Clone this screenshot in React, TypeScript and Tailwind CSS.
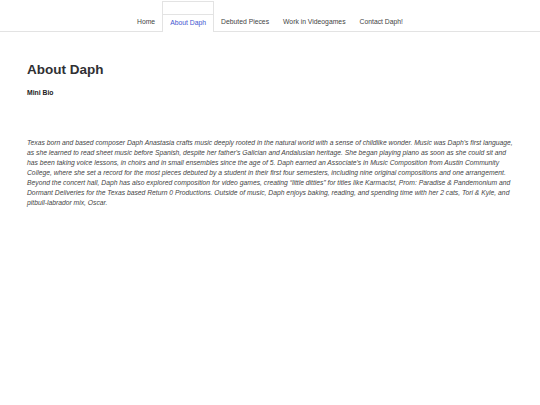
import React from "react";

const tabs = ["Home", "About Daph", "Debuted Pieces", "Work in Videogames", "Contact Daph!"];

const bio =
  "Texas born and based composer Daph Anastasia crafts music deeply rooted in the natural world with a sense of childlike wonder. Music was Daph's first language, as she learned to read sheet music before Spanish, despite her father's Galician and Andalusian heritage. She began playing piano as soon as she could sit and has been taking voice lessons, in choirs and in small ensembles since the age of 5. Daph earned an Associate's in Music Composition from Austin Community College, where she set a record for the most pieces debuted by a student in their first four semesters, including nine original compositions and one arrangement. Beyond the concert hall, Daph has also explored composition for video games, creating \u201clittle ditties\u201d for titles like Karmacist, Prom: Paradise & Pandemonium and Dormant Deliveries for the Texas based Return 0 Productions. Outside of music, Daph enjoys baking, reading, and spending time with her 2 cats, Tori & Kyle, and pitbull-labrador mix, Oscar.";

export default function App() {
  return (
    <div className="min-h-[405px] w-[540px] bg-white font-['Liberation_Sans',Arial,sans-serif] text-[#333]">
      {/* Nav */}
      <nav className="flex justify-center border-b border-[#e3e3e3] pt-[1px]">
        {tabs.map((t) => {
          const active = t === "About Daph";
          return active ? (
            <div
              key={t}
              className="-mb-px flex h-[31px] flex-col border-x border-t border-[#e3e3e3] bg-white"
            >
              <div className="h-[13px] border-b border-[#e3e3e3]" />
              <span className="flex flex-1 items-center px-[7px] pb-[1px] text-[6.8px] text-[#4356d1]">
                {t}
              </span>
            </div>
          ) : (
            <div key={t} className="flex h-[30px] flex-col">
              <div className="h-[13px]" />
              <span className="flex flex-1 items-center px-[7px] text-[6.8px] text-[#444]">{t}</span>
            </div>
          );
        })}
      </nav>

      {/* Main */}
      <main className="px-[27px] pt-[29px]">
        <h1 className="text-[13.5px] font-bold leading-[18px] text-[#2f3033]">About Daph</h1>
        <h2 className="mt-[9px] text-[6.8px] font-bold leading-[10px] text-[#222]">Mini Bio</h2>
        <p className="mt-[40px] w-[488px] text-[6.75px] italic leading-[10px] text-[#444]">{bio}</p>
      </main>
    </div>
  );
}
